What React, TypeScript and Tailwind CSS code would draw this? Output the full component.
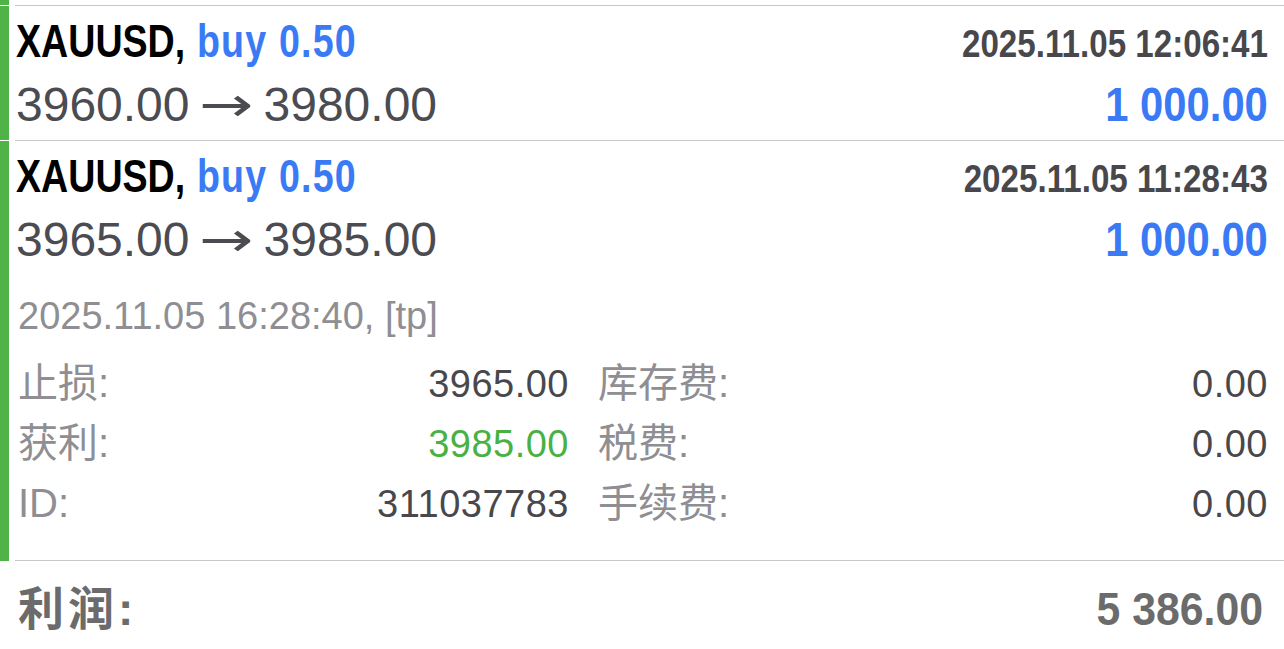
import React from 'react';

const bold = "font-['Liberation_Sans','Noto_Sans_CJK_SC',sans-serif] font-bold";

interface Deal {
  symbol: string;
  side: string;
  volume: string;
  time: string;
  open: string;
  close: string;
  profit: string;
}

const deals: Deal[] = [
  { symbol: 'XAUUSD', side: 'buy', volume: '0.50', time: '2025.11.05 12:06:41', open: '3960.00', close: '3980.00', profit: '1 000.00' },
  { symbol: 'XAUUSD', side: 'buy', volume: '0.50', time: '2025.11.05 11:28:43', open: '3965.00', close: '3985.00', profit: '1 000.00' },
];

function DealHeader({ deal }: { deal: Deal }) {
  return (
    <>
      <div className="flex h-[56px] items-baseline justify-between leading-[56px]">
        <span className={`${bold} inline-block origin-left scale-x-[0.8] whitespace-nowrap text-[47px] text-black`}>
          {deal.symbol},<span className="tracking-[1.5px] text-[#3a7bf5]"> {deal.side} {deal.volume}</span>
        </span>
        <span className={`${bold} inline-block origin-right scale-x-[0.85] whitespace-nowrap text-[39px] text-[#48484c]`}>{deal.time}</span>
      </div>
      <div className="mt-[7px] flex h-[56px] items-baseline justify-between leading-[56px]">
        <span className="whitespace-nowrap text-[48px] text-[#4b4b52]">
          {deal.open}
          <span className="mx-[12px] inline-block w-[50px] text-center font-['DejaVu_Sans',sans-serif]">
            <span className="inline-block scale-x-[1.35]">→</span>
          </span>
          {deal.close}
        </span>
        <span className={`${bold} inline-block origin-right scale-x-[0.87] whitespace-nowrap text-[48px] text-[#3a7bf5]`}>{deal.profit}</span>
      </div>
    </>
  );
}

function Label({ text }: { text: string }) {
  return <span className="text-[40px] text-[#8e8e93]">{text}</span>;
}

function DetailRow({ label, value, valueClass, label2, value2 }: { label: string; value: string; valueClass?: string; label2: string; value2: string }) {
  return (
    <div className="flex h-[60px] items-baseline leading-[60px]">
      <div className="flex w-[551px] items-baseline justify-between">
        <Label text={label} />
        <span className={`tracking-[0.5px] ${valueClass ?? 'text-[#48484c]'}`}>{value}</span>
      </div>
      <div className="ml-[29px] flex flex-1 items-baseline justify-between">
        <Label text={label2} />
        <span className="tracking-[0.5px] text-[#48484c]">{value2}</span>
      </div>
    </div>
  );
}

export default function App() {
  return (
    <div className="h-[649px] w-[1284px] overflow-hidden bg-white font-['Liberation_Sans','Noto_Sans_CJK_SC',sans-serif]">
      {/* tail of previous row */}
      <div className="flex h-[6px]">
        <div className="mb-px w-[9px] bg-[#4fb347]" />
        <div className="ml-[6px] flex-1 border-b border-[#c8c7cc]" />
      </div>

      <div className="flex">
        <div className="mb-px w-[9px] bg-[#4fb347]" />
        <div className="ml-[6px] flex-1 border-b border-[#c8c7cc] pb-[8px] pl-px pr-[16px] pt-[7px]">
          <DealHeader deal={deals[0]} />
        </div>
      </div>

      <div className="flex">
        <div className="w-[9px] bg-[#4fb347]" />
        <div className="ml-[6px] flex-1 border-b border-[#c8c7cc] pb-[27px] pl-px pr-[16px] pt-[7px]">
          <DealHeader deal={deals[1]} />
          <div className="pl-[2px] pt-[26px] text-[38px]">
            <div className="h-[46px] leading-[46px] text-[#8e8e93]">2025.11.05 16:28:40, [tp]</div>
            <div className="mt-[14px]">
              <DetailRow label="止损:" value="3965.00" label2="库存费:" value2="0.00" />
              <DetailRow label="获利:" value="3985.00" valueClass="text-[#47b243]" label2="税费:" value2="0.00" />
              <DetailRow label="ID:" value="311037783" label2="手续费:" value2="0.00" />
            </div>
          </div>
        </div>
      </div>

      <div className="flex items-baseline justify-between pl-[18px] pr-[21px] pt-[20px] leading-[56px]">
        <span className={`${bold} inline-block tracking-[4px] text-[46px] text-[#6b6b6b]`}>利润:</span>
        <span className={`${bold} inline-block origin-right scale-x-[0.93] text-[46px] text-[#6b6b6b]`}>5 386.00</span>
      </div>
    </div>
  );
}
